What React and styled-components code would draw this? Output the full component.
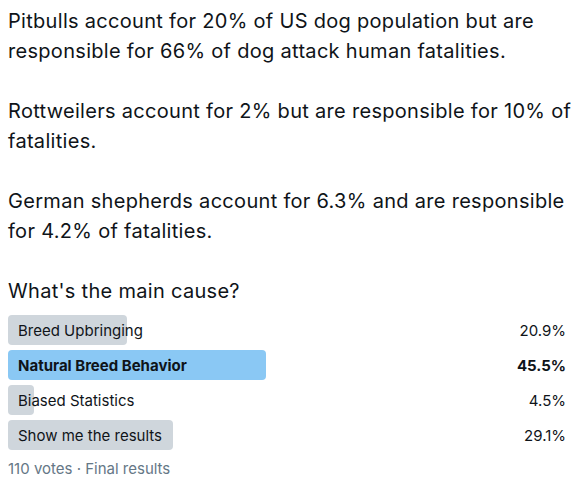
import styled, { createGlobalStyle } from 'styled-components';

const GlobalStyle = createGlobalStyle`
  html, body {
    margin: 0;
    padding: 0;
    background: #ffffff;
  }
  body {
    font-family: Inter, "Noto Sans", "Liberation Sans", sans-serif;
    color: #0f1419;
    -webkit-font-smoothing: antialiased;
  }
`;

const Tweet = styled.div`
  width: 568px;
  padding: 6px 8px 0;
`;

const Paragraph = styled.p`
  margin: 0 0 30px;
  font-size: 20px;
  line-height: 30px;
  letter-spacing: 0.3px;
  &:last-of-type {
    margin-bottom: 0;
  }
`;

const Poll = styled.div`
  display: flex;
  flex-direction: column;
  gap: 5px;
  margin-top: 9px;
`;

const Choice = styled.div`
  position: relative;
  display: flex;
  align-items: center;
  justify-content: space-between;
  height: 30px;
  padding: 0 10px;
  font-size: 15px;
  font-weight: ${props => (props.winner ? 700 : 400)};
`;

const Fill = styled.div`
  position: absolute;
  left: 0;
  top: 0;
  bottom: 0;
  border-radius: 4px;
  background: ${props => (props.winner ? '#8ac8f4' : '#cfd6dc')};
`;

const Label = styled.span`
  position: relative;
  white-space: nowrap;
`;

const Percent = styled.span`
  position: relative;
`;

const Meta = styled.div`
  margin-top: 9px;
  font-size: 15px;
  line-height: 20px;
  color: #657786;
`;

const choices = [
  { label: 'Breed Upbringing', pct: 20.9 },
  { label: 'Natural Breed Behavior', pct: 45.5, winner: true },
  { label: 'Biased Statistics', pct: 4.5 },
  { label: 'Show me the results', pct: 29.1 },
];

const App = () => {
  return (
    <>
      <GlobalStyle />
      <Tweet>
        <Paragraph>
          Pitbulls account for 20% of US dog population but are responsible for 66% of dog attack human fatalities.
        </Paragraph>
        <Paragraph>
          Rottweilers account for 2% but are responsible for 10% of fatalities.
        </Paragraph>
        <Paragraph>
          German shepherds account for 6.3% and are responsible for 4.2% of fatalities.
        </Paragraph>
        <Paragraph>What's the main cause?</Paragraph>

        <Poll>
          {choices.map(choice => (
            <Choice key={choice.label} winner={choice.winner}>
              <Fill winner={choice.winner} style={{ width: `${choice.pct}%` }} />
              <Label>{choice.label}</Label>
              <Percent>{choice.pct}%</Percent>
            </Choice>
          ))}
        </Poll>

        <Meta>110 votes · Final results</Meta>
      </Tweet>
    </>
  );
};

export default App;
